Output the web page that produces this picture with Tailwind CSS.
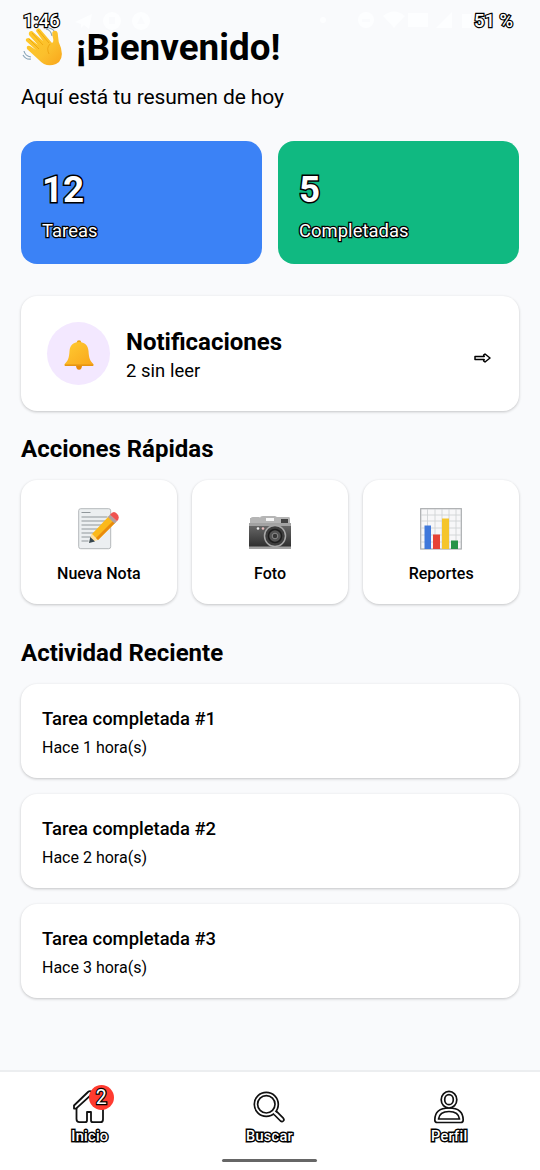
<!DOCTYPE html>
<html lang="es">
<head>
<meta charset="utf-8">
<title>Inicio</title>
<script src="https://cdn.jsdelivr.net/npm/@tailwindcss/browser@4"></script>
</head>
<body class="bg-[#f9fafb]">
<div class="relative flex h-[1170px] w-[540px] flex-col overflow-hidden bg-[#f9fafc] text-black" style="font-family:Roboto,'Noto Sans',sans-serif">
  <!-- status bar, floating over the scrolled content -->
  <div class="absolute inset-x-0 top-[11px] z-10 flex h-5 items-center pl-[23px] pr-[27px] text-[18.4px] leading-5 font-medium text-white">
    <span class="w-[52px] tracking-[0.2px] [-webkit-text-stroke:2.4px_black] [paint-order:stroke_fill]">1:46</span>
    <svg class="h-5 w-20" viewBox="0 0 80 20" fill="#fdfeff"><path d="M0 11 17 3l-3 15-5-4-3 3v-4Z"/><circle cx="37" cy="10" r="9"/><circle cx="66" cy="10" r="9"/><path d="M34 6h6v7h-6zM66 5l4 8h-8z" fill="#fafbfd"/></svg>
    <svg class="mr-[-1px] ml-auto h-5 w-[156px]" viewBox="0 0 156 20" fill="#fdfeff"><circle cx="4" cy="9" r="3"/><circle cx="47" cy="9" r="8"/><path d="M43 8h8v3h-8z" fill="#fafbfd"/><path d="M64 5q11-9 22 0L75 17ZM89 2h20v14H89zM133 1v16h-16zM143 3h9v14h-9z"/></svg>
    <span class="[-webkit-text-stroke:2.4px_black] [paint-order:stroke_fill]">51 %</span>
  </div>

  <main class="flex flex-1 flex-col px-[21px] pt-[26px]">
    <h1 class="flex h-[43px] text-[36.75px] leading-[44px] font-bold">
      <svg class="mt-[1px] mr-[11px] ml-[-1px] h-[42px] w-[44px] shrink-0" viewBox="0 0 44 42" fill="none">
        <defs><linearGradient id="hand" x1="0" y1="0" x2="1" y2="1"><stop stop-color="#ffca28"/><stop offset=".6" stop-color="#fbc02d"/><stop offset="1" stop-color="#f9a51b"/></linearGradient></defs>
        <path d="M26 2q5 1 6 7M29 1q5 1 6 5M4 24q1 5 7 6M3 28q3 5 8 4" stroke="#8ba6b8" stroke-width="1.200"/>
        <path d="M6 14q-1-3 3-3l9 7-9-10q-1-4 3-4l11 10L16 4q1-4 4-2l12 14q2-1 1-5-2-7 1-7 4-1 4 5 0 6 3 12 3 12-5 16-10 4-17-4L7 22q-1-4 3-3l6 4Z" fill="url(#hand)"/>
        <path d="m9 12 10 10M12 6l11 12M18 3l11 13M30 17q-4 4-1 10" stroke="#e59600" stroke-width=".6"/>
      </svg>
      <span class="ml-[1px] tracking-[0.05px]">¡Bienvenido!</span>
    </h1>
    <p class="mt-[14px] h-7 text-[21px] leading-7 tracking-[-0.08px]">Aquí está tu resumen de hoy</p>

    <section class="mt-[30px] grid h-[123px] grid-cols-2 gap-4 text-white">
      <div class="rounded-[16px] bg-[#3b82f6] px-[21px] pt-[27px]">
        <div class="h-[44px] text-[36.75px] leading-[44px] font-bold [-webkit-text-stroke:3px_black] [paint-order:stroke_fill]">12</div>
        <div class="mt-[7px] text-[18.4px] leading-6 tracking-[0.05px] [-webkit-text-stroke:2.6px_black] [paint-order:stroke_fill]">Tareas</div>
      </div>
      <div class="rounded-[16px] bg-[#10b981] px-[21px] pt-[27px]">
        <div class="h-[44px] text-[36.75px] leading-[44px] font-bold [-webkit-text-stroke:3px_black] [paint-order:stroke_fill]">5</div>
        <div class="mt-[7px] text-[18.4px] leading-6 tracking-[0.05px] [-webkit-text-stroke:2.6px_black] [paint-order:stroke_fill]">Completadas</div>
      </div>
    </section>

    <section class="mt-[32px] flex h-[115px] items-center rounded-[16px] bg-white pr-[28px] pl-[26px] shadow-[0_1px_3px_rgba(0,0,0,0.22)]">
      <div class="flex size-[63px] items-center justify-center rounded-full bg-[#f3e8ff]">
        <svg class="mt-[2px] h-[30px] w-[30px]" viewBox="0 0 30 30">
          <defs><linearGradient id="bell" x1="0" y1="0" x2="1" y2="1"><stop stop-color="#ffcc32"/><stop offset="1" stop-color="#f9a51b"/></linearGradient></defs>
          <path d="M12 25h6q0 4.800-3 4.800t-3-4.800Z" fill="#e88909"/><circle cx="15" cy="2.500" r="2.200" fill="#eea513"/>
          <path d="M15 2c6 0 9 3.500 9.500 9 .5 7 1.200 9.500 5 13.200.5 1.500-.5 1.800-1.500 1.800H2c-1 0-2-.3-1.500-1.800C4.300 20.500 5 18 5.500 11 6 5.500 9 2 15 2Z" fill="url(#bell)"/><path d="M1 25.200h28" stroke="#e59412" stroke-width="1.500"/>
        </svg>
      </div>
      <div class="mt-[6px] ml-4 h-[58px]">
        <h2 class="h-7 text-[24px] leading-7 font-bold">Notificaciones</h2>
        <p class="mt-[3px] text-[18.4px] leading-6 tracking-[0.05px]">2 sin leer</p>
      </div>
      <svg class="mt-[9px] ml-auto h-[10px] w-[17px]" viewBox="0 0 17 10" fill="#fff" stroke="#000" stroke-width="1.500" stroke-linejoin="round"><path d="M1 3.400h9.200L9.600 2 11 1l5 4-5 4-1.400-1 .6-1.400H1Z"/></svg>
    </section>

    <h2 class="mt-[24px] h-7 text-[24px] leading-7 font-bold">Acciones Rápidas</h2>
    <section class="mt-[17px] grid h-[124px] grid-cols-3 gap-[15.500px] text-[16px] leading-5 font-medium">
      <div class="flex flex-col items-center rounded-[16px] bg-white pt-[27px] shadow-[0_1px_3px_rgba(0,0,0,0.22)]">
        <svg class="h-[43px] w-[42px]" viewBox="0 0 42 43">
          <rect x=".7" y="1.700" width="32" height="40" rx="2" fill="#eceff1" stroke="#b4b8ba"/>
          <path d="M3.500 5.500h9M3.500 10h26M3.500 14h26M3.500 18h24M3.500 22h20M3.500 26h16M3.500 30h13M3.500 34h7" stroke="#90979b" stroke-width="1.100"/>
          <path d="m11.500 35.500 2-9 6.500 6.500Z" fill="#ffe0a0"/><path d="m11 36 1.300-6 4.700 4.500Z" fill="#37474f"/>
          <path d="M14 27 31 9l6.500 6.500L20 33Z" fill="#fbb91b"/><path d="M18 31 35.500 13.500l2 2L20 33Z" fill="#e98b0c"/>
          <path d="m30 10 2-2.500 7 6.800-2.500 2.200Z" fill="#b0a0a0"/><path d="M32 7.700q3.500-4.700 7-1t0 7.600Z" fill="#ef5350"/>
        </svg>
        <span class="mt-[14px]">Nueva Nota</span>
      </div>
      <div class="flex flex-col items-center rounded-[16px] bg-white pt-[27px] shadow-[0_1px_3px_rgba(0,0,0,0.22)]">
        <svg class="h-[43px] w-[42px]" viewBox="0 0 42 43">
          <defs><linearGradient id="cam" x1="0" y1="0" x2="0" y2="1"><stop stop-color="#686868"/><stop offset="1" stop-color="#292929"/></linearGradient></defs>
          <path d="M2 11q0-1 2-1h6q1 0 1 1 0-2 3-2h12l2 1h12q1 0 1 2v5H1v-6Z" fill="#b5b5b5"/><path d="M17 11h8v3h-8z" fill="#f7f7f7"/><path d="M32 12h7v4h-7z" fill="#424242"/>
          <rect y="18" width="42" height="24" rx="1" fill="url(#cam)"/><path d="M0 16h42v3H0zM0 39.500h42V42H0z" fill="#a2a2a2"/><circle cx="9" cy="21.500" r="1.300" fill="#eee"/><circle cx="14" cy="21.500" r="1.300" fill="#e6bcbc"/>
          <circle cx="26" cy="29" r="10.500" fill="#3d3d3d" stroke="#a8a8a8" stroke-width="1.500"/><circle cx="26" cy="29" r="6.500" fill="#555" stroke="#1d1d1d" stroke-width="1.500"/><circle cx="26" cy="29" r="2.800" fill="#363636" stroke="#8b8b8b"/>
        </svg>
        <span class="mt-[14px]">Foto</span>
      </div>
      <div class="flex flex-col items-center rounded-[16px] bg-white pt-[27px] shadow-[0_1px_3px_rgba(0,0,0,0.22)]">
        <svg class="h-[43px] w-[42px]" viewBox="0 0 42 43">
          <rect x=".7" y="1.700" width="40.600" height="40.300" fill="#f7f7f8" stroke="#a9acae" stroke-width="1.200"/>
          <path d="M7.500 2v40M15 2v40M22 2v40M29 2v40M36 2v40M1 8h40M1 14h40M1 21h40M1 28h40M1 35h40" stroke="#cfd2d5" stroke-width=".9"/>
          <path d="M4.500 18.500H11V42H4.500z" fill="#3f78db"/><path d="M13 27.500h7V42h-7z" fill="#e74334"/><path d="M22 11.500h7V42h-7z" fill="#f5c52b"/><path d="M31 33.500h7V42h-7z" fill="#259447"/>
        </svg>
        <span class="mt-[14px]">Reportes</span>
      </div>
    </section>

    <h2 class="mt-[35px] h-7 text-[24px] leading-7 font-bold">Actividad Reciente</h2>
    <section class="mt-[17px] flex flex-col gap-4">
      <div class="h-[94px] rounded-[16px] bg-white px-[21px] pt-[23px] shadow-[0_1px_3px_rgba(0,0,0,0.22)]"><h3 class="text-[18.4px] leading-6 font-medium">Tarea completada #1</h3><p class="mt-[7px] text-[16px] leading-5">Hace 1 hora(s)</p></div>
      <div class="h-[94px] rounded-[16px] bg-white px-[21px] pt-[23px] shadow-[0_1px_3px_rgba(0,0,0,0.22)]"><h3 class="text-[18.4px] leading-6 font-medium">Tarea completada #2</h3><p class="mt-[7px] text-[16px] leading-5">Hace 2 hora(s)</p></div>
      <div class="h-[94px] rounded-[16px] bg-white px-[21px] pt-[23px] shadow-[0_1px_3px_rgba(0,0,0,0.22)]"><h3 class="text-[18.4px] leading-6 font-medium">Tarea completada #3</h3><p class="mt-[7px] text-[16px] leading-5">Hace 3 hora(s)</p></div>
    </section>
  </main>

  <nav class="relative grid h-[100px] shrink-0 grid-cols-3 border-t-2 border-[#eceef0] bg-white pr-[1px] text-[14.500px] leading-4 font-medium tracking-[0.3px] text-white">
    <div class="flex flex-col items-center pt-[17px]">
      <div class="relative h-9 w-[34px]">
        <svg class="h-9 w-[34px]" viewBox="0 0 34 36" fill="#fff" stroke="#111" stroke-width="1.800" stroke-linejoin="round"><path d="M3.500 17v13q0 3.200 3 3.200h5.700q1.800 0 1.800-2V23h4v8.200q0 2 1.800 2h7.700q2.500 0 2.500-3V12L17 5Z"/><path d="M1 16.500v3l2 .2L17 6.800l10 9V12L19 3q-2-1.800-4 0Z"/></svg>
        <div class="absolute top-[-4px] left-[16px] flex size-[25px] items-center justify-center rounded-full bg-[#ff3b30] text-[19.500px] leading-none font-normal [-webkit-text-stroke:2.4px_black] [paint-order:stroke_fill]">2</div>
      </div>
      <span class="mt-1 [-webkit-text-stroke:2.8px_black] [paint-order:stroke_fill]">Inicio</span>
    </div>
    <div class="flex flex-col items-center pt-[17px]">
      <svg class="h-9 w-[34px]" viewBox="0 0 34 36" fill="#fff" stroke="#111" stroke-width="1.700" stroke-linejoin="round"><path d="m21.500 25 7 7q1.500 1.200 2.800 0t0-2.800l-7-7Z"/><circle cx="14.300" cy="15.300" r="12"/><circle cx="14.300" cy="15.300" r="8.700"/><path d="m22 24.500 1.500-1.500" stroke="#fff" stroke-width="3"/></svg>
      <span class="mt-1 [-webkit-text-stroke:2.8px_black] [paint-order:stroke_fill]">Buscar</span>
    </div>
    <div class="flex flex-col items-center pt-[17px]">
      <svg class="h-9 w-[34px]" viewBox="0 0 34 36" fill="#fff" stroke="#111" stroke-width="1.700" stroke-linejoin="round"><path d="M2.800 31q0-12 14.200-12t14.200 12q0 2.500-2.500 2.500H5.300q-2.500 0-2.500-2.500Z"/><path d="M6.500 30q1-7.500 10.500-7.500T27.500 30Z"/><ellipse cx="17" cy="10.700" rx="7.800" ry="8.300"/><ellipse cx="17" cy="10.700" rx="4.300" ry="5"/></svg>
      <span class="mt-1 [-webkit-text-stroke:2.8px_black] [paint-order:stroke_fill]">Perfil</span>
    </div>
    <div class="absolute bottom-[8px] left-[222px] h-[3px] w-[95px] rounded-full bg-[#666]"></div>
  </nav>
</div>
</body>
</html>
